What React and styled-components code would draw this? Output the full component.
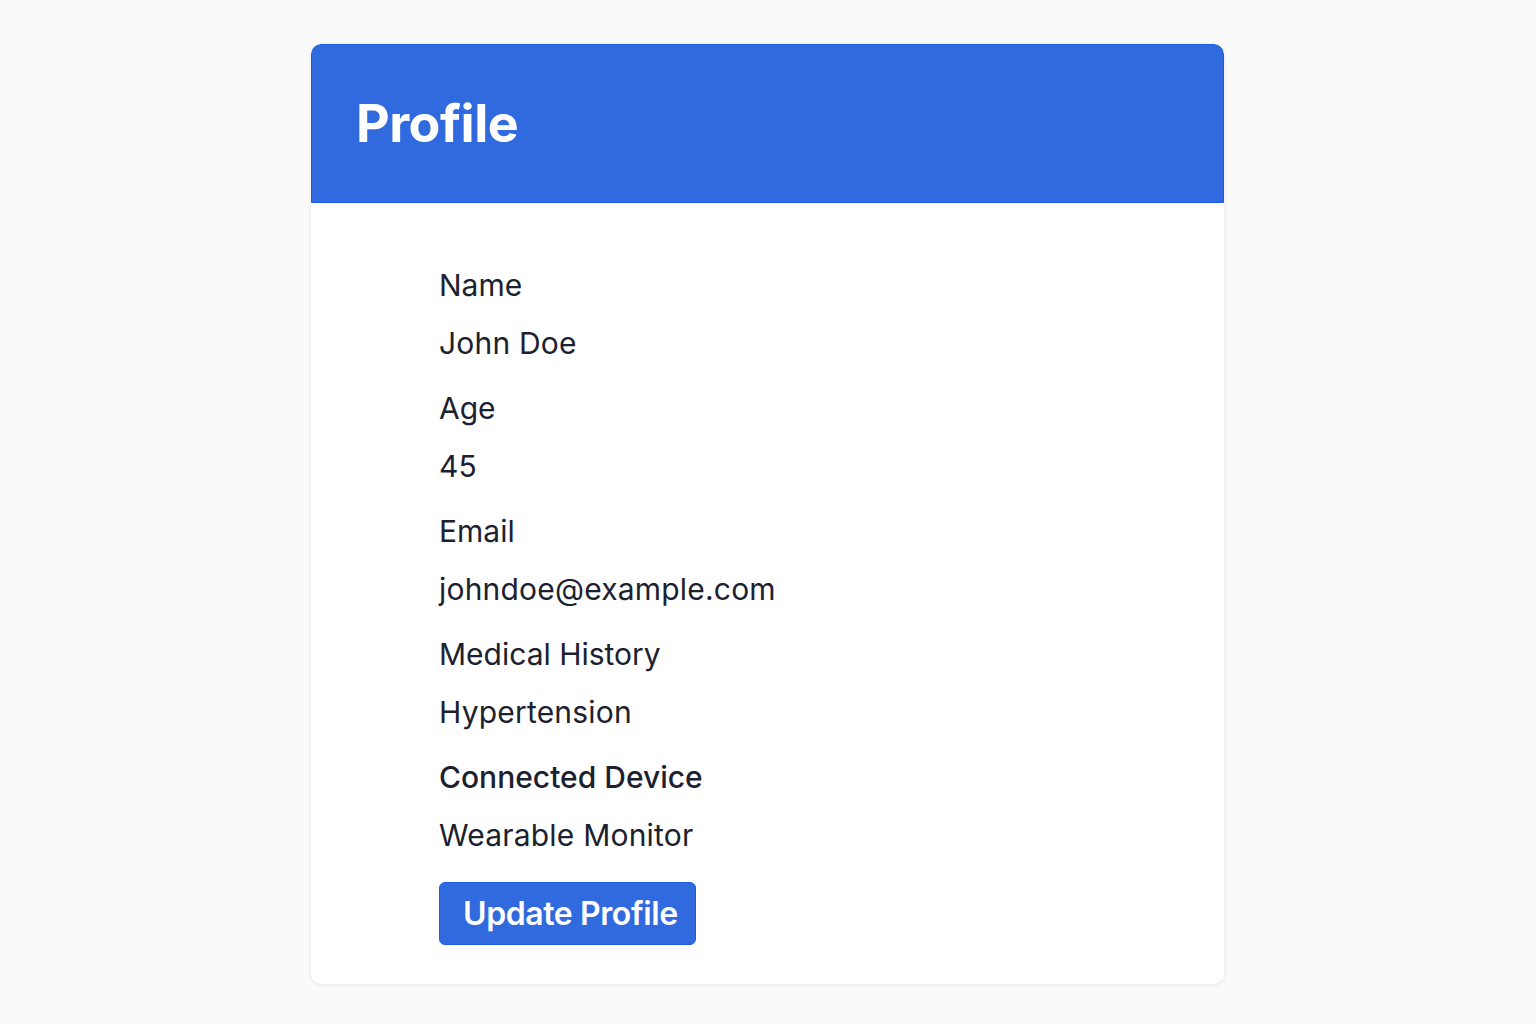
import styled, { createGlobalStyle } from 'styled-components';

const GlobalStyle = createGlobalStyle`
  html, body {
    margin: 0;
    padding: 0;
    background: #fafafa;
    font-family: Inter, "Helvetica Neue", Arial, sans-serif;
    color: #1c2130;
  }
`;

const Page = styled.main`
  display: flex;
  justify-content: center;
  padding: 44px 0 40px;
`;

const Card = styled.section`
  width: 913px;
  margin-left: -1px;
  background: #ffffff;
  border-radius: 10px;
  overflow: hidden;
  box-shadow: 0 1px 4px rgba(0, 0, 0, 0.08), 0 0 1px rgba(0, 0, 0, 0.06);
`;

const Header = styled.header`
  height: 159px;
  box-sizing: border-box;
  background: #3169de;
  border: 1px solid #1d5ce3;
  border-radius: 10px 10px 0 0;
  display: flex;
  align-items: center;
  padding: 0 44px;
`;

const Title = styled.h1`
  margin: 0;
  font-size: 52px;
  font-weight: 700;
  color: #ffffff;
  letter-spacing: -0.5px;
`;

const Body = styled.div`
  padding: 64px 128px 39px;
`;

const Field = styled.div`
  display: flex;
  flex-direction: column;
  margin-bottom: 29px;
`;

const Label = styled.div`
  font-size: 30px;
  line-height: 36px;
  font-weight: ${({ $strong }) => ($strong ? 500 : 400)};
  margin-bottom: 22px;
`;

const Value = styled.div`
  font-size: 30px;
  line-height: 36px;
  font-weight: 400;
  letter-spacing: 0.2px;
`;

const Button = styled.button`
  height: 63px;
  padding: 0 17px 0 23px;
  background: #3169de;
  border: 1px solid #1d5ce3;
  border-radius: 6px;
  color: #ffffff;
  font-family: inherit;
  font-size: 32px;
  font-weight: 600;
  letter-spacing: -0.4px;
  cursor: pointer;
`;

const fields = [
  { label: 'Name', value: 'John Doe' },
  { label: 'Age', value: '45' },
  { label: 'Email', value: 'johndoe@example.com' },
  { label: 'Medical History', value: 'Hypertension' },
  { label: 'Connected Device', value: 'Wearable Monitor', strong: true },
];

export default function App() {
  return (
    <>
      <GlobalStyle />
      <Page>
        <Card>
          <Header>
            <Title>Profile</Title>
          </Header>
          <Body>
            {fields.map((f) => (
              <Field key={f.label}>
                <Label $strong={f.strong}>{f.label}</Label>
                <Value>{f.value}</Value>
              </Field>
            ))}
            <Button>Update Profile</Button>
          </Body>
        </Card>
      </Page>
    </>
  );
}
